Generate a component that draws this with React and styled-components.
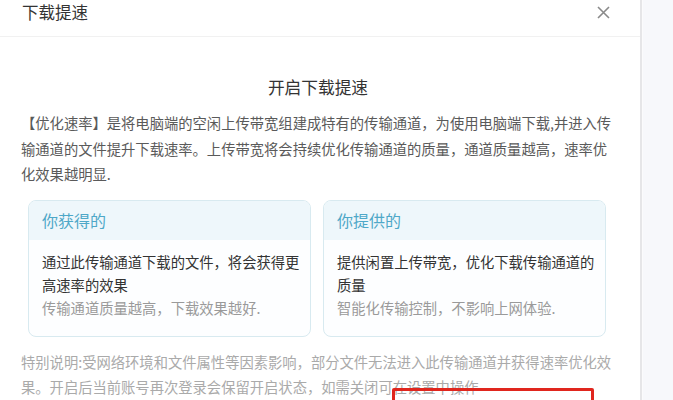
import React from "react";
import styled, { createGlobalStyle } from "styled-components";

const Global = createGlobalStyle`
  html, body { margin: 0; padding: 0; background: #f7f8fb; }
  body { font-family: "Noto Sans CJK SC", "Noto Sans", sans-serif; }
  #root { width: 673px; height: 400px; overflow: hidden; }
`;

const Page = styled.div`
  position: relative;
  display: flex;
  width: 673px;
  height: 400px;
  overflow: hidden;
  background: #f7f8fb;
`;

const Dialog = styled.div`
  width: 640px;
  height: 400px;
  flex: none;
  background: #fff;
  border-right: 2px solid #e6e6e8;
  box-shadow: 1px 0 0 #fbfbfc;
  display: flex;
  flex-direction: column;
`;

const Header = styled.div`
  height: 36px;
  flex: none;
  display: flex;
  justify-content: space-between;
  align-items: flex-start;
  padding: 0 25px 0 22px;
  border-bottom: 1px solid #f1f1f1;
`;

const HeaderTitle = styled.div`
  font-size: 16.5px;
  line-height: 24px;
  color: #333;
`;

const CloseBtn = styled.div`
  width: 24px;
  height: 24px;
  display: flex;
  align-items: center;
  justify-content: center;
`;

const Content = styled.div`
  padding: 0 29px 0 21px;
  display: flex;
  flex-direction: column;
`;

const SectionTitle = styled.div`
  margin-top: 38px;
  text-align: center;
  font-size: 16.7px;
  line-height: 24px;
  color: #333;
  padding-left: 4px;
`;

const Paragraph = styled.p`
  margin: 11px 0 0;
  font-size: 14.3px;
  line-height: 25.5px;
  color: #5a5a5a;
  white-space: nowrap;
`;

const Cards = styled.div`
  margin: 13px 5px 0 7px;
  display: grid;
  grid-template-columns: 1fr 1fr;
  gap: 12px;
`;

const Card = styled.div`
  border: 1px solid #d8eaf0;
  border-radius: 8px;
  overflow: hidden;
  background: #fdfeff;
`;

const CardHead = styled.div`
  height: 39px;
  background: #eef7fb;
  padding: 0 13px;
  display: flex;
  align-items: center;
  font-size: 16px;
  color: #4ea8c8;
`;

const CardBody = styled.div`
  padding: 10px 6px 17px 13px;
  font-size: 14.3px;
  line-height: 23px;
  white-space: nowrap;
`;

const CardMain = styled.div`
  color: #333;
`;

const CardHint = styled.div`
  color: #9a9a9a;
`;

const Note = styled.p`
  margin: 12px 0 0;
  font-size: 14.3px;
  line-height: 25px;
  color: #aaaaaa;
  white-space: nowrap;
`;

const Highlight = styled.div`
  position: absolute;
  left: 392px;
  top: 388px;
  width: 196px;
  height: 40px;
  border: 3px solid #e0261e;
  border-radius: 2px;
`;

const CloseIcon = () => (
  <svg width="13" height="13" viewBox="0 0 13 13">
    <path d="M1 1 L12 12 M12 1 L1 12" stroke="#8a8a8a" strokeWidth="1.6" fill="none" />
  </svg>
);

export default function App() {
  return (
    <>
      <Global />
      <Page>
        <Dialog>
          <Header>
            <HeaderTitle>下载提速</HeaderTitle>
            <CloseBtn>
              <CloseIcon />
            </CloseBtn>
          </Header>
          <Content>
            <SectionTitle>开启下载提速</SectionTitle>
            <Paragraph>
              【优化速率】是将电脑端的空闲上传带宽组建成特有的传输通道，为使用电脑端下载,并进入传
              <br />
              输通道的文件提升下载速率。上传带宽将会持续优化传输通道的质量，通道质量越高，速率优
              <br />
              化效果越明显.
            </Paragraph>
            <Cards>
              <Card>
                <CardHead>你获得的</CardHead>
                <CardBody>
                  <CardMain>
                    通过此传输通道下载的文件，将会获得更
                    <br />
                    高速率的效果
                  </CardMain>
                  <CardHint>传输通道质量越高，下载效果越好.</CardHint>
                </CardBody>
              </Card>
              <Card>
                <CardHead>你提供的</CardHead>
                <CardBody>
                  <CardMain>
                    提供闲置上传带宽，优化下载传输通道的
                    <br />
                    质量
                  </CardMain>
                  <CardHint>智能化传输控制，不影响上网体验.</CardHint>
                </CardBody>
              </Card>
            </Cards>
            <Note>
              特别说明:受网络环境和文件属性等因素影响，部分文件无法进入此传输通道并获得速率优化效
              <br />
              果。开启后当前账号再次登录会保留开启状态，如需关闭可在设置中操作
            </Note>
          </Content>
        </Dialog>
        <Highlight />
      </Page>
    </>
  );
}
